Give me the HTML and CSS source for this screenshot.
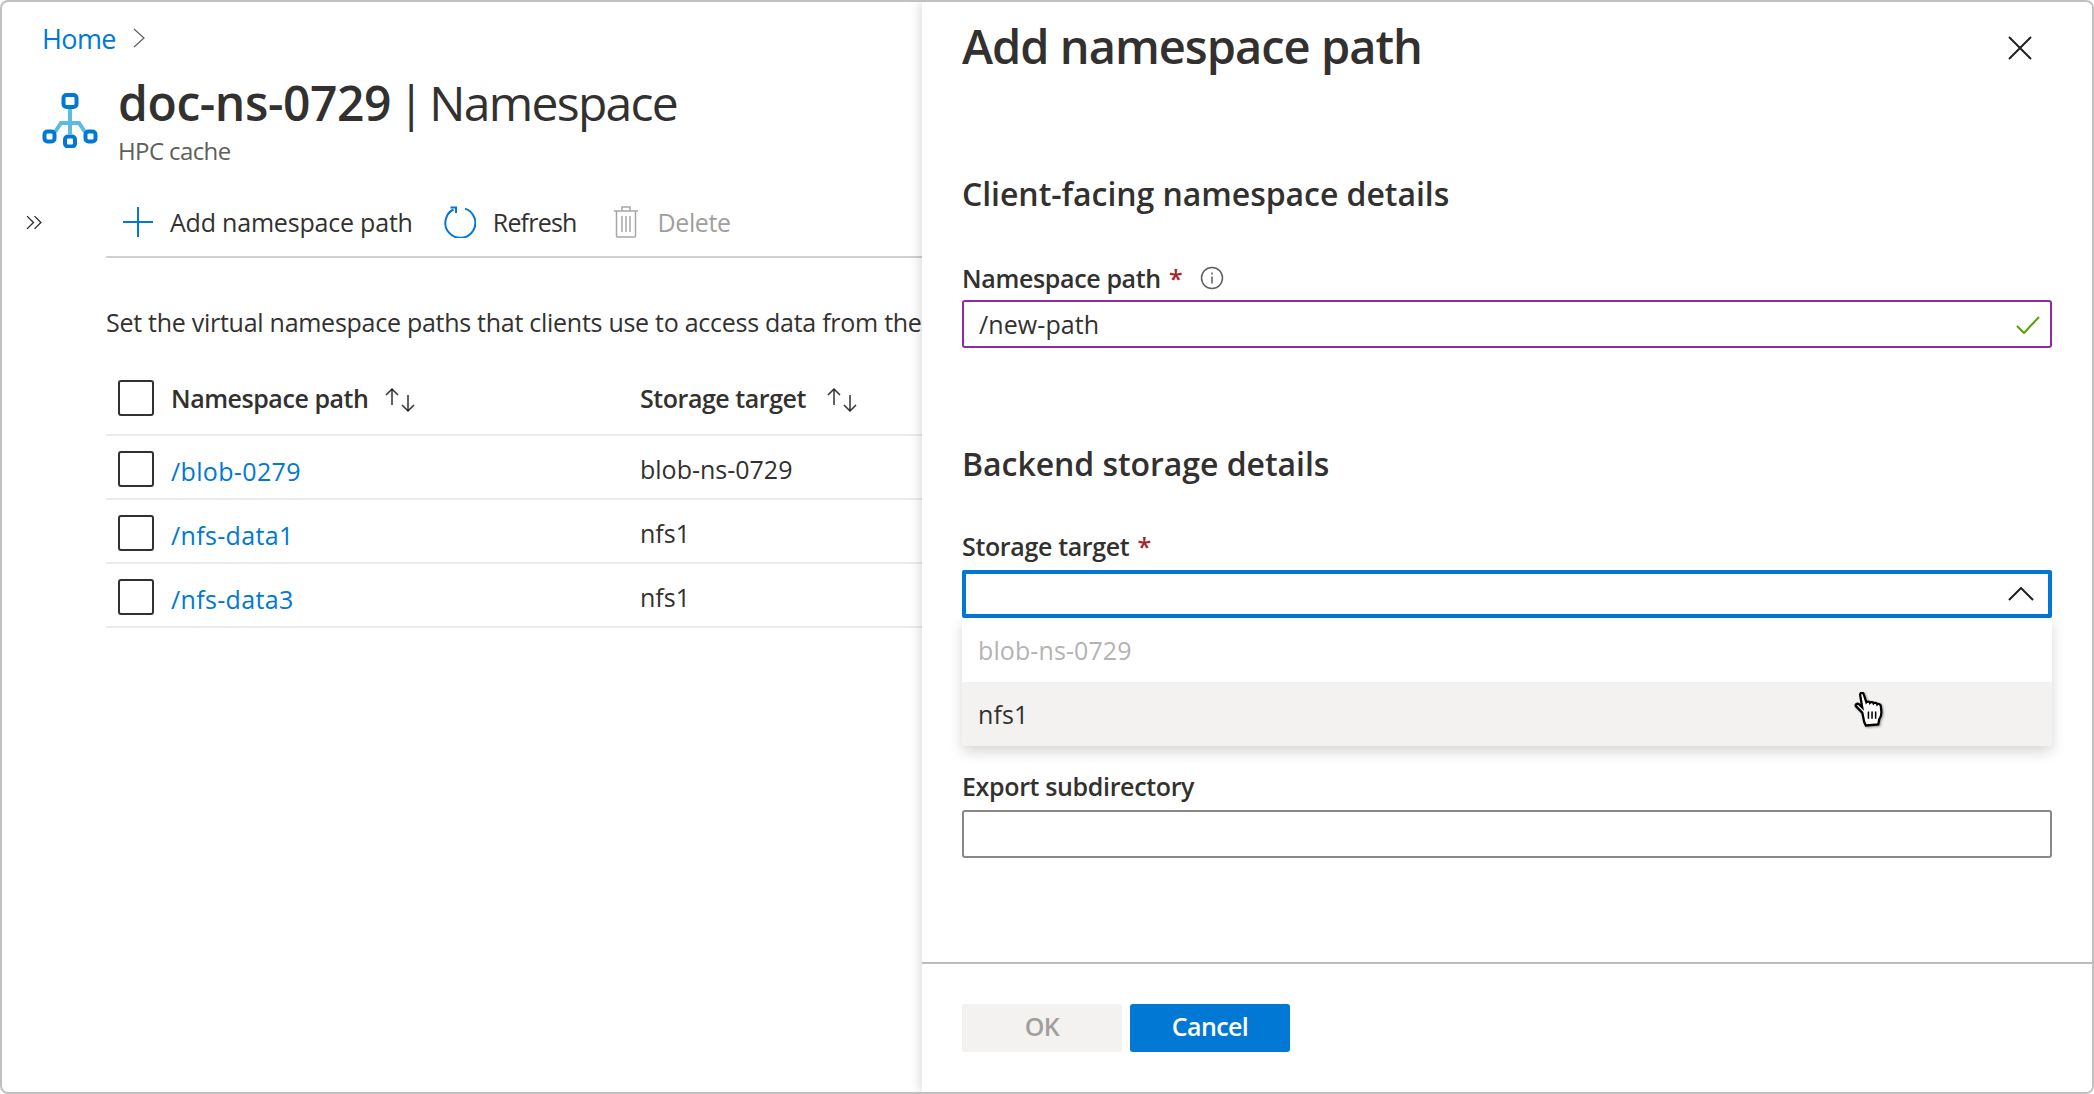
FILE: index.html
```html
<!DOCTYPE html>
<html lang="en">
<head>
	<meta charset="UTF-8">
	<title>Add namespace path</title>
	<link rel="stylesheet" href="styles.css">
</head>
<body>
	<div class="frame">
		<div class="page">
			<nav class="crumb">
				<a href="#">Home</a>
				<svg class="crumb-chevron" viewBox="0 0 12 20"><path d="M1 1l10 9-10 9"/></svg>
			</nav>
			<header class="head">
				<svg class="head-icon" viewBox="0 0 56 56">
					<path class="link-line" d="M28 16v26M13 40l6-9h18l6 9"/>
					<rect class="node" x="21.5" y="3" width="13" height="12" rx="3"/>
					<rect class="node" x="2.500" y="39.500" width="10" height="10" rx="3"/>
					<rect class="node" x="23" y="44.500" width="10" height="10" rx="3"/>
					<rect class="node" x="43.500" y="39.500" width="10" height="10" rx="3"/>
				</svg>
				<div>
					<h1 class="head-title"><b>doc-ns-0729</b> | Namespace</h1>
					<div class="head-sub">HPC cache</div>
				</div>
			</header>
			<div class="body">
				<div class="collapse">
					<svg viewBox="0 0 16 14"><path d="M1 1l6 6-6 6M8 1l6 6-6 6"/></svg>
				</div>
				<main class="main">
					<div class="toolbar">
						<svg class="tool-add" viewBox="0 0 30 30"><path d="M15 0v30M0 15h30"/></svg>
						<span class="tool-text tool-text-wide">Add namespace path</span>
						<svg class="tool-refresh" viewBox="0 0 32 32"><path d="M21 2.600A15 15 0 1 1 9.500 3.500"/><path d="M6.500 1.500h5.500v5.500"/></svg>
						<span class="tool-text tool-text-tight">Refresh</span>
						<svg class="tool-delete" viewBox="0 0 24 32"><path d="M0 5h24M2.500 5v25a1 1 0 0 0 1 1h17a1 1 0 0 0 1-1V5M8 5V1h8v4M8 10v16M12 10v16M16 10v16"/></svg>
						<span class="tool-text is-off">Delete</span>
					</div>
					<p class="desc">Set the virtual namespace paths that clients use to access data from the</p>
					<div class="row row-head">
						<span class="check"></span>
						<span class="cell-name">Namespace path
							<svg class="sort" viewBox="0 0 32 24"><path d="M8 1v16M2 7l6-6 6 6M24 7v16M18 17l6 6 6-6"/></svg>
						</span>
						<span>Storage target
							<svg class="sort" viewBox="0 0 32 24"><path d="M8 1v16M2 7l6-6 6 6M24 7v16M18 17l6 6 6-6"/></svg>
						</span>
					</div>
					<div class="row">
						<span class="check"></span>
						<a class="cell-name row-link" href="#">/blob-0279</a>
						<span>blob-ns-0729</span>
					</div>
					<div class="row">
						<span class="check"></span>
						<a class="cell-name row-link" href="#">/nfs-data1</a>
						<span>nfs1</span>
					</div>
					<div class="row">
						<span class="check"></span>
						<a class="cell-name row-link" href="#">/nfs-data3</a>
						<span>nfs1</span>
					</div>
				</main>
			</div>
		</div>

		<aside class="panel">
			<div class="panel-head">
				<h2 class="panel-title">Add namespace path</h2>
				<svg class="panel-close" viewBox="0 0 24 24"><path d="M1 1l22 22M23 1L1 23"/></svg>
			</div>
			<div class="panel-body">
				<h3 class="section section-first">Client-facing namespace details</h3>
				<label class="field-label">Namespace path <span class="req">*</span>
					<svg class="info" viewBox="0 0 24 24"><circle cx="12" cy="12" r="10.500"/><path d="M12 10.500v7M12 6.500v2"/></svg>
				</label>
				<div class="input input-valid">
					<span>/new-path</span>
					<svg class="valid-check" viewBox="0 0 24 18"><path d="M1 10l7 7L23 1"/></svg>
				</div>

				<h3 class="section">Backend storage details</h3>
				<label class="field-label">Storage target <span class="req">*</span></label>
				<div class="select-wrap">
					<div class="input input-open">
						<svg class="select-chevron" viewBox="0 0 26 14"><path d="M1 13L13 1l12 12"/></svg>
					</div>
					<ul class="menu">
						<li class="menu-item is-off">blob-ns-0729</li>
						<li class="menu-item is-hover">nfs1</li>
					</ul>
				</div>

				<label class="field-label field-export">Export subdirectory</label>
				<div class="input"></div>
			</div>
			<footer class="panel-foot">
				<button class="btn btn-off">OK</button>
				<button class="btn btn-primary">Cancel</button>
			</footer>
		</aside>

		<svg class="cursor" viewBox="0 0 32 34">
			<path d="M8 20L2 14c-1.500-1.500 1-3.500 3-2l3 3L6 3c-.5-2.500 3-3 3.500-.5L12 10c1-1 3-1 3.500.5 1-1 3-1 3.500.5 1-1 3-.5 3.500 1 1-1 3-.5 3.500 1.500l.5 5c.3 3-.5 6-2 8l-1 5-12 1-1.500-3z"/>
			<path class="cursor-bars" d="M14 19v7M17.500 19v7M21 19v7"/>
		</svg>
	</div>
</body>
</html>
```

FILE: styles.css
```css
* {
	box-sizing: border-box;
}
html, body {
	margin: 0;
	background: #fff;
}
body {
	font-family: "Open Sans", "Noto Sans", sans-serif;
	font-size: 25px;
	letter-spacing: -0.6px;
	color: #323130;
}
a {
	color: #0078d4;
	text-decoration: none;
}
svg {
	display: block;
	fill: none;
	flex: none;
}

.frame {
	position: relative;
	width: 2094px;
	height: 1094px;
	border: 2px solid #c0c0c0;
	border-radius: 8px;
	overflow: hidden;
}

/* resource page behind the panel */
.crumb {
	display: flex;
	align-items: center;
	height: 32px;
	margin-top: 20px;
	padding-left: 40px;
	font-size: 27px;
}
.crumb-chevron {
	width: 12px;
	height: 20px;
	margin-left: 17px;
	stroke: #605e5c;
	stroke-width: 1.200;
}
.head {
	display: flex;
	gap: 20px;
	padding: 17px 0 0 40px;
}
.head-icon {
	width: 56px;
	height: 56px;
	margin-top: 21px;
}
.link-line {
	stroke: #5ebbe0;
	stroke-width: 4;
}
.node {
	fill: #fff;
	stroke: #0078d4;
	stroke-width: 4;
}
.head-title {
	margin: 0;
	font-size: 48px;
	font-weight: 400;
	line-height: 64px;
	letter-spacing: -1.7px;
	word-spacing: -4px;
	white-space: nowrap;
}
.head-title b {
	font-weight: 600;
	letter-spacing: -0.4px;
}
.head-sub {
	font-size: 24px;
	line-height: 32px;
	color: #605e5c;
}
.body {
	display: flex;
	margin-top: 23px;
}
.collapse {
	flex: none;
	width: 104px;
	padding: 25px 0 0 24px;
}
.collapse svg {
	width: 17px;
	height: 15px;
	stroke: #323130;
	stroke-width: 1.300;
}
.main {
	flex: none;
	width: 816px;
	white-space: nowrap;
}
.toolbar {
	display: flex;
	align-items: center;
	height: 68px;
	padding: 0 0 2px 17px;
	border-bottom: 2px solid #d2d0ce;
}
.tool-text {
	margin-left: 17px;
}
.tool-text-wide {
	letter-spacing: -0.2px;
}
.tool-text-tight {
	letter-spacing: -0.8px;
}
.tool-text.is-off {
	margin-left: 20px;
	color: #a19f9d;
	letter-spacing: -0.4px;
}
.tool-add {
	width: 30px;
	height: 30px;
	stroke: #0078d4;
	stroke-width: 2;
}
.tool-refresh {
	width: 32px;
	height: 32px;
	margin-left: 31px;
	stroke: #0078d4;
	stroke-width: 2;
}
.tool-delete {
	width: 24px;
	height: 32px;
	margin-left: 37px;
	stroke: #a6a6a6;
	stroke-width: 1.500;
}
.desc {
	margin: 48px 0 23px;
	line-height: 32px;
	letter-spacing: -0.27px;
	overflow: hidden;
}

/* namespace table */
.row {
	display: grid;
	grid-template-columns: 36px 452px 1fr;
	column-gap: 17px;
	align-items: center;
	height: 64px;
	padding: 3px 0 0 12px;
	border-bottom: 2px solid #edebe9;
	letter-spacing: 0;
}
.row-head {
	height: 75px;
	padding-top: 0;
	font-weight: 600;
	letter-spacing: -0.45px;
}
.check {
	width: 36px;
	height: 36px;
	border: 2px solid #323130;
	border-radius: 3px;
}
.row-link {
	padding-top: 4px;
	letter-spacing: 0.35px;
}
.sort {
	display: inline-block;
	width: 32px;
	height: 24px;
	margin-left: 14px;
	vertical-align: -4px;
	stroke: #323130;
	stroke-width: 1.500;
}
.cell-name .sort {
	margin-left: 10px;
}

/* side panel */
.panel {
	position: absolute;
	top: 0;
	right: 0;
	bottom: 0;
	left: 920px;
	display: flex;
	flex-direction: column;
	background: #fff;
	box-shadow: -3px 0 10px rgba(0, 0, 0, 0.13);
}
.panel-head {
	display: flex;
	justify-content: space-between;
	align-items: flex-start;
	padding: 12px 60px 0 40px;
}
.panel-title {
	margin: 0;
	font-size: 47px;
	font-weight: 600;
	line-height: 64px;
	letter-spacing: -1px;
}
.panel-close {
	width: 24px;
	height: 24px;
	margin-top: 22px;
	stroke: #1f1f1f;
	stroke-width: 2;
}
.panel-body {
	padding: 0 40px;
}
.section {
	margin: 94px 0 44px;
	font-size: 32px;
	font-weight: 600;
	line-height: 44px;
	letter-spacing: -0.05px;
}
.section-first {
	margin-bottom: 46px;
}
.field-label {
	display: flex;
	align-items: center;
	height: 32px;
	margin-bottom: 8px;
	font-weight: 600;
	letter-spacing: -0.35px;
	white-space: pre;
}
.section-first + .field-label {
	margin-bottom: 6px;
}
.field-export {
	margin-top: 152px;
}
.req {
	margin-left: 2px;
	color: #a4262c;
}
.info {
	width: 24px;
	height: 24px;
	margin-left: 18px;
	stroke: #605e5c;
	stroke-width: 1.500;
}
.input {
	display: flex;
	align-items: center;
	justify-content: space-between;
	height: 48px;
	padding: 0 10px 0 15px;
	border: 2px solid #8a8886;
	border-radius: 3px;
	background: #fff;
	letter-spacing: 0.1px;
}
.input-valid {
	border-color: #8e2ba0;
}
.valid-check {
	width: 24px;
	height: 18px;
	margin-top: 2px;
	stroke: #57a300;
	stroke-width: 2;
}
.input-open {
	justify-content: flex-end;
	padding-right: 14px;
	border: 4px solid #0078d4;
	border-radius: 2px;
}
.select-chevron {
	width: 26px;
	height: 14px;
	stroke: #1f1f1f;
	stroke-width: 2;
}
.select-wrap {
	position: relative;
}
.menu {
	position: absolute;
	top: 48px;
	left: 0;
	right: 0;
	z-index: 2;
	margin: 0;
	padding: 0;
	list-style: none;
	background: #fff;
	border-radius: 0 0 3px 3px;
	box-shadow: 0 6px 14px rgba(0, 0, 0, 0.16);
	letter-spacing: 0.1px;
}
.menu-item {
	height: 64px;
	padding: 0 16px;
	line-height: 64px;
}
.menu-item.is-off {
	color: #b5b3b1;
}
.menu-item.is-hover {
	background: #f3f2f1;
	border-radius: 0 0 3px 3px;
}
.panel-foot {
	display: flex;
	gap: 8px;
	height: 130px;
	margin-top: auto;
	padding: 40px 0 0 40px;
	border-top: 2px solid #bdbdbd;
}
.btn {
	width: 160px;
	height: 48px;
	padding: 0 0 5px;
	border: 0;
	border-radius: 3px;
	font: inherit;
	font-weight: 600;
	letter-spacing: inherit;
}
.btn-off {
	background: #f3f2f1;
	color: #a19f9d;
}
.btn-primary {
	background: #0078d4;
	color: #fff;
}

/* mouse pointer over the list */
.cursor {
	position: absolute;
	left: 1852px;
	top: 690px;
	z-index: 3;
	width: 33px;
	height: 35px;
	fill: #fff;
	stroke: #000;
	stroke-width: 2.200;
	filter: drop-shadow(1px 1px 1px rgba(0, 0, 0, 0.4));
}
.cursor-bars {
	stroke-width: 1.500;
}
```
